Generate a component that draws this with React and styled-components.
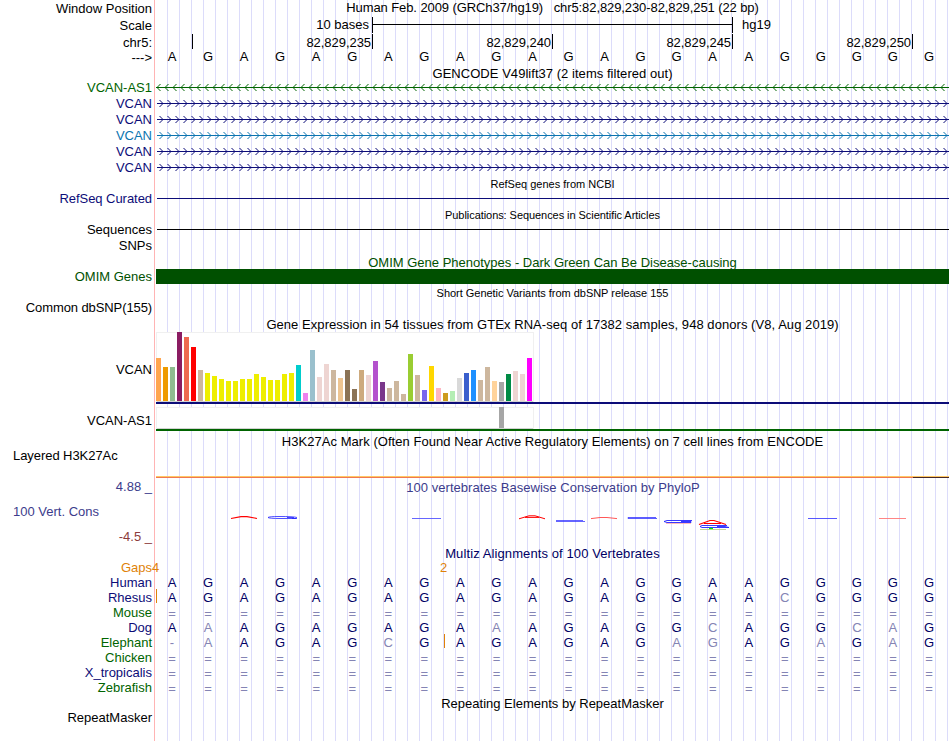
import React from 'react'
import styled, { createGlobalStyle } from 'styled-components'

const labelWidth = 155
const trackWidth = 794

const navy = '#0c0c78'
const darkGreen = '#006400'
const orange = '#e08208'

const GlobalStyle = createGlobalStyle`
  body {
    margin: 0;
    background: #fff;
    overflow: hidden;
  }
`

const Page = styled.div`
  box-sizing: border-box;
  width: 950px;
  height: 741px;
  overflow: hidden;
  font: 13px/15px "Liberation Sans", Arial, sans-serif;
  color: #000;
  white-space: pre;
  background:
    linear-gradient(#ffb4b4, #ffb4b4) 154px 0 / 1px 100% no-repeat,
    repeating-linear-gradient(to right, #dcdcfa 0, #dcdcfa 1px, transparent 1px, transparent 12px) 167px 0 / 783px 100% no-repeat;
`

const Row = styled.div`
  display: grid;
  grid-template-columns: ${labelWidth}px ${trackWidth}px;
  height: ${p => p.$h}px;
`

const Label = styled.div`
  box-sizing: border-box;
  padding: ${p => p.$pad || 0}px 3px 0 13px;
  text-align: ${p => p.$left ? 'left' : 'right'};
  color: ${p => p.$color || '#000'};
  letter-spacing: ${p => p.$ls || 0}px;
`

const Track = styled.div`
  box-sizing: border-box;
  min-width: 0;
  padding: ${p => p.$pad || 0}px 0 0 1px;
`

const Title = styled(Track)`
  text-align: center;
  font-size: ${p => p.$small ? 11 : 13}px;
  color: ${p => p.$color || '#000'};
  letter-spacing: ${p => p.$ls || 0}px;
`

const ScaleBar = styled.div`
  display: grid;
  grid-template-columns: 213px 361px auto;
  column-gap: 3px;
`

const ScaleText = styled.span`
  text-align: right;
`

const Bracket = styled.div`
  box-sizing: border-box;
  height: 16px;
  border: solid #000;
  border-width: 0 1px;
  background: linear-gradient(#000, #000) 0 7px / 100% 1px no-repeat;
`

const Assembly = styled.span`
  padding-left: 6px;
`

const Ruler = styled.div`
  display: grid;
  grid-template-columns: 37px repeat(4, 180px);
`

const Tick = styled.div`
  box-sizing: border-box;
  height: 15px;
  padding: 1px 1px 0 0;
  border-right: 1px solid #000;
  text-align: right;
  letter-spacing: -0.05px;
`

const Bases = styled.div`
  display: grid;
  grid-template-columns: repeat(22, 1fr);
  width: 793px;
  margin-left: -2px;
  text-align: center;
`

const Base = styled.span`
  color: ${p => p.$faded ? '#8484b4' : p.$color || '#000'};
  height: 13px;
  ${p => p.$low && 'padding-top: 2px; line-height: 13px;'}
`

const Insert = styled.div`
  width: 1px;
  height: 14px;
  margin: -1px 0 -13px ${p => p.$x}px;
  background: ${orange};
`

const Gene = styled.svg`
  display: block;
  width: 793px;
  height: 15px;
`

const Line = styled.div`
  height: ${p => p.$h || 1}px;
  margin: ${p => p.$top || 0}px 0 0 ${p => p.$left || 0}px;
  background: ${p => p.$color || '#000'};
`

const Expression = styled.div`
  box-sizing: border-box;
  display: flex;
  align-items: flex-end;
  gap: 2px;
  width: 378px;
  height: ${p => p.$h}px;
  background: #fff;
  box-shadow: inset 0 1px #f0f0f0, inset -1px 0 #f0f0f0, inset 1px 0 #f0f0f0, inset 0 -1px #d2d2d2;
  padding-bottom: 1px;
`

const Bar = styled.div`
  width: 5px;
  height: ${p => p.$h}px;
  background: ${p => p.$color};
`

const SignalLine = styled.div`
  display: flex;
  height: 2px;
  margin-top: 30px;
  background: linear-gradient(#ffc864 50%, #f07850 50%);
  &::after {
    content: '';
    width: 36px;
    height: 1px;
    margin: 1px 0 0 auto;
    background: #462828;
  }
`

const ConsLabels = styled.div`
  display: grid;
  grid-template-rows: 25px 25px 15px;
`

const Logo = styled.svg`
  display: block;
  width: 793px;
  height: 20px;
  margin-top: 18px;
  fill: none;
`

const GapRow = styled.div`
  display: grid;
  grid-template-columns: 152px 288px auto;
  height: 15px;
  color: ${orange};
`

const GapLabel = styled.span`
  text-align: right;
`

const reference = 'AGAGAGAGAGAGAGGAAGGGGG'

// lower case marks a base that differs from the human one
const species = [
  { name: 'Human', color: navy, bases: reference },
  { name: 'Rhesus', color: navy, bases: 'AGAGAGAGAGAGAGGAAcGGGG', insert: 0 },
  { name: 'Mouse', color: darkGreen },
  { name: 'Dog', color: navy, bases: 'AaAGAGAGAaAGAGGcAGGcaG' },
  { name: 'Elephant', color: darkGreen, bases: '-aAGAGcGAGAGAGagAGaGaG', insert: 288 },
  { name: 'Chicken', color: darkGreen },
  { name: 'X_tropicalis', color: navy },
  { name: 'Zebrafish', color: darkGreen },
]

const genes = [
  { name: 'VCAN-AS1', color: darkGreen, reverse: true },
  { name: 'VCAN', color: navy },
  { name: 'VCAN', color: navy },
  { name: 'VCAN', color: '#0b74b0' },
  { name: 'VCAN', color: navy },
  { name: 'VCAN', color: navy },
]

const tissues = [
  [43, '#ffa54f'], [34, '#ee9a00'], [34, '#8fbc8f'], [69, '#8b1c62'], [64, '#ee6a50'], [54, '#ff0000'],
  [31, '#cdb79e'], [28, '#eeee00'], [25, '#eeee00'], [22, '#eeee00'], [20, '#eeee00'], [20, '#eeee00'],
  [22, '#eeee00'], [22, '#eeee00'], [27, '#eeee00'], [24, '#eeee00'], [21, '#eeee00'], [21, '#eeee00'],
  [27, '#eeee00'], [28, '#eeee00'], [36, '#00cdcd'], [8, '#ee82ee'], [51, '#9ac0cd'], [24, '#eed5d2'],
  [37, '#eed5d2'], [31, '#cdb79e'], [23, '#eec591'], [31, '#8b7355'], [12, '#8b7355'], [31, '#cdaa7d'],
  [26, '#eed5d2'], [40, '#b452cd'], [19, '#7a378b'], [13, '#cdb79e'], [20, '#cdb79e'], [7, '#cdb79e'],
  [47, '#9acd32'], [26, '#cdb79e'], [11, '#7a67ee'], [35, '#ffd700'], [13, '#ffb6c1'], [8, '#cd9b1d'],
  [10, '#b4eeb4'], [23, '#d9d9d9'], [28, '#3a5fcd'], [31, '#1e90ff'], [21, '#cdb79e'], [34, '#cdb79e'],
  [20, '#ffd39b'], [19, '#a6a6a6'], [27, '#008b45'], [30, '#eed5d2'], [27, '#eed5d2'], [43, '#ff00ff'],
]

function TitleRow({ h = 15, label, labelPad, children, ...rest }) {
  return (
    <Row $h={h}>
      <Label $pad={labelPad}>{label}</Label>
      <Title {...rest}>{children}</Title>
    </Row>
  )
}

function Sequence({ bases, color }) {
  const letters = (bases || '='.repeat(22)).split('')
  return (
    <Bases>
      {letters.map((b, i) => (
        <Base key={i} $color={color} $faded={b === '=' || b === '-' || b !== b.toUpperCase()} $low={b === '='}>
          {b.toUpperCase()}
        </Base>
      ))}
    </Bases>
  )
}

function GeneLine({ color, reverse }) {
  const start = reverse ? 1 : 3.5
  const arrows = []
  for (let x = start; x < 793; x += 8) {
    arrows.push(reverse ? `M${x + 3.5} 4L${x} 7.5L${x + 3.5} 11` : `M${x} 4L${x + 3.5} 7.5L${x} 11`)
  }
  return (
    <Gene viewBox="0 0 793 15">
      <path d={`M${reverse ? 0 : 1} 7.5H793`} stroke={color} />
      <path d={arrows.join('')} stroke={color} strokeWidth="1" fill="none" />
    </Gene>
  )
}

// x offsets run from the left edge of the track
function ConservationLogo() {
  return (
    <Logo viewBox="0 0 793 20">
      <path d="M75 5.5L85 3.6H91L101 5.5" stroke="#f00" strokeWidth="1.1" />
      <path d="M141 5.5H136M141 4.5Q138 3.5 123 3.5Q113 3.5 112 4.5Q113 5.5 125 5.5H140M131 4.5H138" stroke="#22f" strokeWidth="0.8" />
      <path d="M256 5.5H285" stroke="#55f" strokeWidth="0.9" />
      <path d="M363 5.8L373 2.8H379L389 5.8M369 4.4H383" stroke="#f00" strokeWidth="1" />
      <path d="M400 7.5H427M400 8.5H429" stroke="#22f" strokeWidth="0.7" />
      <path d="M435 5.6L444 4.5H451L461 5.6" stroke="#f44" strokeWidth="0.9" />
      <path d="M500 4.5H472V5.5H501" stroke="#33f" strokeWidth="0.8" />
      <path d="M536 7.5H511L508 8.5L511 9.5H535V8.5H525" stroke="#22f" strokeWidth="0.9" />
      <path d="M510 10.5H535" stroke="#faa" strokeWidth="0.8" />
      <path d="M543 11.5L554 7.5H558L570 11.5M548 10.5H565" stroke="#f00" strokeWidth="1.2" />
      <path d="M571 12.5H546L544 13.5L546 14.5H573L569 13.5H561" stroke="#22f" strokeWidth="0.9" />
      <path d="M544 16.5H570" stroke="#b4c878" strokeWidth="0.8" />
      <path d="M553 15.5H557" stroke="#0e0" strokeWidth="1.2" />
      <path d="M652 5.5H681" stroke="#44f" strokeWidth="0.9" />
      <path d="M723 5.5H750" stroke="#f77" strokeWidth="0.9" />
    </Logo>
  )
}

function App() {
  return (
    <Page>
      <GlobalStyle />
      <TitleRow h={17} label="Window Position" labelPad={1} $ls={-0.09}>
        {'Human Feb. 2009 (GRCh37/hg19)   chr5:82,829,230-82,829,251 (22 bp)'}
      </TitleRow>
      <Row $h={17}>
        <Label $pad={1}>Scale</Label>
        <Track>
          <ScaleBar>
            <ScaleText>10 bases</ScaleText>
            <Bracket />
            <Assembly>hg19</Assembly>
          </ScaleBar>
        </Track>
      </Row>
      <Row $h={15}>
        <Label $pad={1}>chr5:</Label>
        <Track>
          <Ruler>
            {['', '82,829,235', '82,829,240', '82,829,245', '82,829,250'].map(t => <Tick key={t}>{t}</Tick>)}
          </Ruler>
        </Track>
      </Row>
      <Row $h={16}>
        <Label $pad={1}>{'--->'}</Label>
        <Track><Sequence bases={reference} /></Track>
      </Row>

      <TitleRow $pad={1} $ls={0.04}>GENCODE V49lift37 (2 items filtered out)</TitleRow>
      {genes.map((gene, i) => (
        <Row key={i} $h={16}>
          <Label $color={gene.color}>{gene.name}</Label>
          <Track><GeneLine color={gene.color} reverse={gene.reverse} /></Track>
        </Row>
      ))}

      <TitleRow $small $pad={1}>RefSeq genes from NCBI</TitleRow>
      <Row $h={16}>
        <Label $color={navy} $ls={-0.05}>RefSeq Curated</Label>
        <Track><Line $top={7} $left={1} $color={navy} /></Track>
      </Row>
      <TitleRow $small $pad={1} $ls={-0.06}>Publications: Sequences in Scientific Articles</TitleRow>
      <Row $h={16}>
        <Label>Sequences</Label>
        <Track><Line $top={7} $left={1} /></Track>
      </Row>
      <Row $h={16}>
        <Label>SNPs</Label>
      </Row>
      <TitleRow $pad={1} $color="#005000">OMIM Gene Phenotypes - Dark Green Can Be Disease-causing</TitleRow>
      <Row $h={16}>
        <Label $color="#005000">OMIM Genes</Label>
        <Track><Line $h={15} $color="#005000" /></Track>
      </Row>
      <TitleRow $small $pad={1} $ls={-0.03}>Short Genetic Variants from dbSNP release 155</TitleRow>
      <Row $h={16}>
        <Label $ls={-0.1}>Common dbSNP(155)</Label>
      </Row>

      <TitleRow h={16} $pad={1} $ls={0.055}>
        Gene Expression in 54 tissues from GTEx RNA-seq of 17382 samples, 948 donors (V8, Aug 2019)
      </TitleRow>
      <Row $h={73}>
        <Label $pad={30}>VCAN</Label>
        <Track>
          <Expression $h={70}>
            {tissues.map(([h, color], i) => <Bar key={i} $h={h} $color={color} />)}
          </Expression>
          <Line $h={2} $color={navy} />
        </Track>
      </Row>
      <Row $h={26}>
        <Label $pad={8}>VCAN-AS1</Label>
        <Track $pad={2}>
          <Expression $h={22}>
            {tissues.map(([, color], i) => <Bar key={i} $h={i === 49 ? 21 : 0} $color={color} />)}
          </Expression>
          <Line $h={2} $color={darkGreen} />
        </Track>
      </Row>

      <TitleRow $pad={3} $ls={0.045}>H3K27Ac Mark (Often Found Near Active Regulatory Elements) on 7 cell lines from ENCODE</TitleRow>
      <Row $h={33}>
        <Label $left $pad={2} $ls={-0.06}>Layered H3K27Ac</Label>
        <Track><SignalLine /></Track>
      </Row>

      <Row $h={67}>
        <ConsLabels>
          <Label $color="#3c3c8c">4.88 _</Label>
          <Label $color="#3c3c8c" $left>100 Vert. Cons</Label>
          <Label $color="#8c3c3c">-4.5 _</Label>
        </ConsLabels>
        <Track>
          <Title $pad={1} $color="#3c3c8c" $ls={0.03}>100 vertebrates Basewise Conservation by PhyloP</Title>
          <ConservationLogo />
        </Track>
      </Row>

      <TitleRow h={14} $color="#000064" $ls={0.1}>Multiz Alignments of 100 Vertebrates</TitleRow>
      <GapRow>
        <GapLabel>Gaps</GapLabel>
        <span>4</span>
        <span>2</span>
      </GapRow>
      {species.map(s => (
        <Row key={s.name} $h={15}>
          <Label $color={s.color}>{s.name}</Label>
          <Track>
            {s.insert !== undefined && <Insert $x={s.insert} />}
            <Sequence bases={s.bases} color="#000064" />
          </Track>
        </Row>
      ))}

      <TitleRow $pad={1}>Repeating Elements by RepeatMasker</TitleRow>
      <Row $h={16}>
        <Label>RepeatMasker</Label>
      </Row>
    </Page>
  )
}

export default App
